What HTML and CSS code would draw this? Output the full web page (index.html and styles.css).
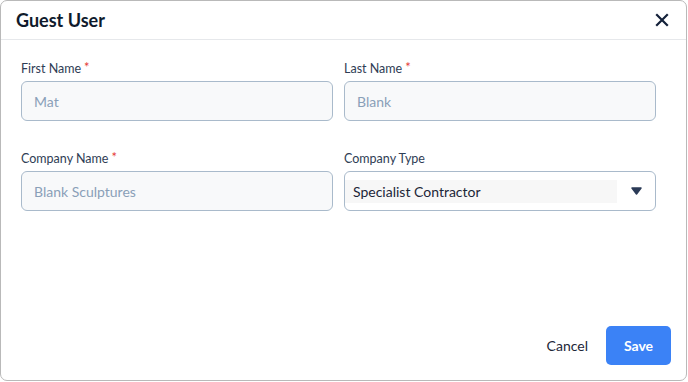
FILE: index.html
```html
<!DOCTYPE html>
<html>
<head>
    <title>Guest User</title>
    <meta charset="UTF-8">
    <link rel="stylesheet" href="styles.css">
</head>
<body>
    <div class="dialog">
        <div class="dialog-header">
            <h1 class="dialog-title">Guest User</h1>
            <button class="close-btn" aria-label="Close">
                <svg width="14" height="14" viewBox="0 0 14 14"><path d="M2 2L12 12M12 2L2 12" stroke="#14213a" stroke-width="2.2" stroke-linecap="square"/></svg>
            </button>
        </div>
        <form class="dialog-body">
            <div class="field">
                <label class="field-label">First Name<span class="req">*</span></label>
                <input class="field-input" value="Mat" disabled>
            </div>
            <div class="field">
                <label class="field-label">Last Name<span class="req">*</span></label>
                <input class="field-input" value="Blank" disabled>
            </div>
            <div class="field">
                <label class="field-label">Company Name<span class="req">*</span></label>
                <input class="field-input" value="Blank Sculptures" disabled>
            </div>
            <div class="field">
                <label class="field-label">Company Type</label>
                <div class="select">
                    <span class="select-value">Specialist Contractor</span>
                    <svg class="caret" width="11" height="8" viewBox="0 0 11 8"><path d="M1 1H10L5.5 7Z" fill="#2b3b57" stroke="#2b3b57" stroke-width="1.5" stroke-linejoin="round"/></svg>
                </div>
            </div>
        </form>
        <div class="dialog-footer">
            <button class="btn-cancel">Cancel</button>
            <button class="btn-save">Save</button>
        </div>
    </div>
</body>
</html>
```

FILE: styles.css
```css
html, body {
    margin: 0;
    height: 100%;
}
body {
    background-color: #ffffff;
    font-family: Lato, "Open Sans", sans-serif;
}
.dialog {
    box-sizing: border-box;
    width: 687px;
    height: 381px;
    border: 1px solid #b9b9b9;
    border-radius: 7px;
    display: flex;
    flex-direction: column;
}
.dialog-header {
    height: 38px;
    border-bottom: 1px solid #e6e8eb;
    display: flex;
    align-items: center;
    justify-content: space-between;
    padding: 0 17px 0 15px;
}
.dialog-title {
    margin: 0;
    font-size: 18px;
    font-weight: 700;
    color: #0f1a2c;
}
.close-btn {
    border: none;
    background: none;
    padding: 0;
    display: flex;
    cursor: pointer;
}
.dialog-body {
    margin: 0;
    padding: 20px 30px 0 20px;
    display: grid;
    grid-template-columns: 1fr 1fr;
    column-gap: 11px;
    row-gap: 29px;
}
.field {
    display: flex;
    flex-direction: column;
}
.field-label {
    font-size: 12.5px;
    color: #2f3d55;
    height: 17px;
    line-height: 17px;
    margin-bottom: 4px;
}
.req {
    color: #e53935;
    font-size: 13px;
    vertical-align: top;
    line-height: 14px;
    margin-left: 3px;
}
.field-input {
    box-sizing: border-box;
    height: 40px;
    border: 1px solid #a9bacb;
    border-radius: 6px;
    background-color: #f8f9fa;
    padding: 0 12px;
    font-family: inherit;
    font-size: 14px;
    color: #8aa0b8;
    -webkit-text-fill-color: #8aa0b8;
    opacity: 1;
}
.select {
    box-sizing: border-box;
    height: 40px;
    border: 1px solid #a9bacb;
    border-radius: 6px;
    background-color: #ffffff;
    display: flex;
    align-items: center;
    padding: 0 13px 0 0;
}
.select-value {
    flex: 1;
    background-color: #f7f7f7;
    height: 23px;
    line-height: 23px;
    padding-left: 8px;
    margin-right: 14px;
    font-size: 14px;
    font-weight: 400;
    color: #1c2638;
}
.caret {
    display: block;
}
.dialog-footer {
    margin-top: auto;
    display: flex;
    justify-content: flex-end;
    align-items: center;
    gap: 18px;
    padding: 0 15px 15px 0;
}
.btn-cancel {
    border: none;
    background: none;
    font-family: inherit;
    font-size: 14px;
    color: #1c2638;
    padding: 0;
    cursor: pointer;
}
.btn-save {
    width: 65px;
    height: 39px;
    border: none;
    border-radius: 5px;
    background-color: #3b82f6;
    color: #ffffff;
    font-family: inherit;
    font-size: 14px;
    font-weight: 700;
    cursor: pointer;
}
```
